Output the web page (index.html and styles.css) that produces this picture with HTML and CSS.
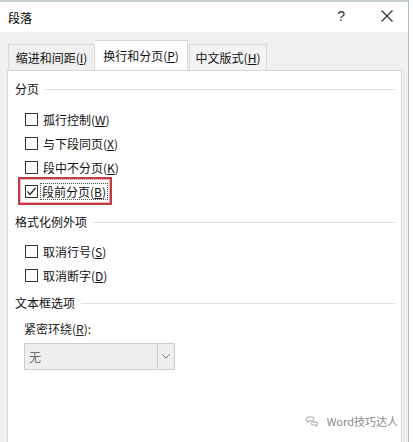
FILE: index.html
```html
<!DOCTYPE html>
<html lang="zh-CN">
<head>
    <meta charset="UTF-8">
    <title>段落</title>
    <link rel="stylesheet" href="styles.css">
</head>
<body>
    <div class="dialog">
        <!-- Title bar -->
        <div class="titlebar">
            <span class="title">段落</span>
            <span class="help">?</span>
            <svg class="close" width="12" height="12" viewBox="0 0 12 12">
                <path d="M0.5 0.5 L11.5 11.5 M11.5 0.5 L0.5 11.5" stroke="#2b2b2b" stroke-width="1.1" fill="none"/>
            </svg>
        </div>

        <!-- Tabs -->
        <div class="tabs">
            <div class="tab tab-first">缩进和间距(<u>I</u>)</div>
            <div class="tab tab-active">换行和分页(<u>P</u>)</div>
            <div class="tab tab-last">中文版式(<u>H</u>)</div>
        </div>

        <div class="panel">
            <div class="group-title"><span>分页</span></div>
            <div class="row"><span class="box"></span><span>孤行控制(<u>W</u>)</span></div>
            <div class="row"><span class="box"></span><span>与下段同页(<u>X</u>)</span></div>
            <div class="row"><span class="box"></span><span>段中不分页(<u>K</u>)</span></div>
            <div class="row">
                <div class="highlight">
                    <span class="box checked">
                        <svg width="11" height="11" viewBox="0 0 11 11">
                            <path d="M1.5 5.5 L4 8.5 L9.5 2" stroke="#222" stroke-width="1.2" fill="none"/>
                        </svg>
                    </span>
                    <span class="focus">段前分页(<u>B</u>)</span>
                </div>
            </div>

            <div class="group-title second"><span>格式化例外项</span></div>
            <div class="row"><span class="box"></span><span>取消行号(<u>S</u>)</span></div>
            <div class="row"><span class="box"></span><span>取消断字(<u>D</u>)</span></div>

            <div class="group-title third"><span>文本框选项</span></div>
            <div class="field-label">紧密环绕(<u>R</u>):</div>
            <div class="select">
                <span class="select-value">无</span>
                <span class="select-button">
                    <svg width="8" height="5" viewBox="0 0 8 5">
                        <path d="M0.5 0.5 L4 4 L7.5 0.5" stroke="#777" stroke-width="1" fill="none"/>
                    </svg>
                </span>
            </div>

            <!-- Watermark over the panel -->
            <div class="watermark">
                <svg width="14" height="11" viewBox="0 0 14 11">
                    <path d="M1 3 Q1 1 4 1 L7 1 Q9 1 9 3 Q9 5 7 5 L4 5 L2.5 6.5 L3 5 Q1 5 1 3 Z" fill="none" stroke="#999" stroke-width="0.9"/>
                    <path d="M6 7.5 Q6 6 8.5 6 L11 6 Q13 6 13 7.5 Q13 9 11 9 L11.5 10.3 L10 9 L8.5 9 Q6 9 6 7.5 Z" fill="none" stroke="#999" stroke-width="0.9"/>
                </svg>
                <span>Word技巧达人</span>
            </div>
        </div>
    </div>
</body>
</html>
```

FILE: styles.css
```css
body {
    margin: 0;
    padding: 0;
    background: #ffffff;
    font-family: "Noto Sans CJK SC", "Liberation Sans", sans-serif;
    font-size: 12px;
    color: #111;
    overflow: hidden;
}
u {
    text-decoration: underline;
    text-underline-offset: 1px;
}
.dialog {
    width: 408px;
    height: 440px;
    background: #f0f0f0;
    border-top: 2px solid #c9d3cc;
    border-right: 1px solid #a9bccb;
    display: flex;
    flex-direction: column;
}
.titlebar {
    height: 30px;
    background: #ffffff;
    display: flex;
    align-items: center;
    flex-shrink: 0;
}
.title {
    margin-left: 8px;
    font-size: 12px;
    color: #000;
}
.help {
    margin-left: auto;
    font-family: "Liberation Sans", sans-serif;
    font-size: 14px;
    color: #333;
    margin-right: 36px;
    margin-top: -2px;
}
.close {
    margin-right: 15px;
    margin-top: -2px;
}
.tabs {
    display: flex;
    align-items: flex-end;
    padding-left: 8px;
    margin-top: 8px;
    height: 30px;
    flex-shrink: 0;
}
.tab {
    height: 26px;
    line-height: 26px;
    border: 1px solid #d9d9d9;
    border-bottom: none;
    background: #f0f0f0;
    text-align: center;
    box-sizing: border-box;
    color: #111;
}
.tab-first {
    width: 87px;
}
.tab-active {
    height: 31px;
    line-height: 29px;
    width: 93px;
    background: #ffffff;
    border-left: none;
    position: relative;
    top: 1px;
}
.tab-last {
    width: 78px;
    margin-left: 1px;
    background: #f3f3f3;
}
.panel {
    position: relative;
    flex: 1;
    margin-left: 7px;
    margin-right: 6px;
    background: #ffffff;
    border: 1px solid #d9d9d9;
    border-bottom: none;
    padding: 10px 6px 0 7px;
}
.group-title {
    display: flex;
    align-items: center;
    height: 16px;
    line-height: 16px;
    margin-bottom: 10px;
}
.group-title::after {
    content: "";
    flex: 1;
    height: 1px;
    background: #dedede;
    margin-left: 6px;
}
.group-title.second {
    margin-top: 11px;
    margin-bottom: 9px;
}
.group-title.third {
    margin-top: 8px;
    margin-bottom: 10px;
}
.row {
    height: 24px;
    display: flex;
    align-items: center;
    padding-left: 10px;
}
.box {
    width: 11px;
    height: 11px;
    border: 1px solid #333;
    margin-right: 5px;
    flex-shrink: 0;
    display: flex;
    align-items: center;
    justify-content: center;
    background: #fff;
}
.highlight {
    display: flex;
    align-items: center;
    margin-left: -7px;
    padding: 3px 3px 3px 5px;
    border: 2px solid #c23a44;
    box-shadow: inset 0 0 0 1px #eab3b8;
    height: 18px;
}
.focus {
    outline: 1px dotted #555;
    padding: 0 1px;
    line-height: 15px;
    margin-left: -2px;
}
.field-label {
    height: 16px;
    line-height: 16px;
    padding-left: 9px;
    margin-bottom: 6px;
    color: #222;
}
.select {
    margin-left: 9px;
    width: 151px;
    height: 27px;
    box-sizing: border-box;
    border: 1px solid #cccccc;
    background: #efefef;
    display: flex;
    align-items: center;
}
.select-value {
    flex: 1;
    padding-left: 4px;
    color: #6f6f6f;
}
.select-button {
    width: 16px;
    height: 25px;
    border-left: 1px solid #cccccc;
    display: flex;
    align-items: center;
    justify-content: center;
}
.watermark {
    position: absolute;
    right: 3px;
    bottom: 13px;
    display: flex;
    align-items: center;
    gap: 8px;
    font-size: 11px;
    color: #8a8a8a;
}
```
